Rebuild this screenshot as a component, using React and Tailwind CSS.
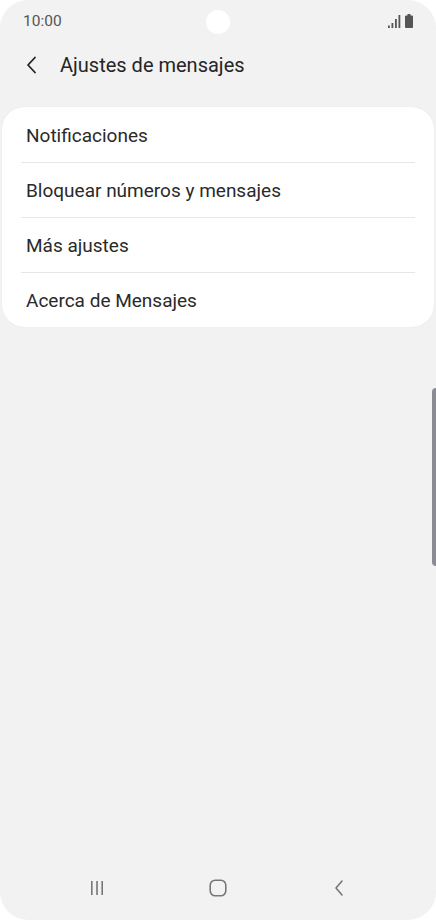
import React from "react";

const rows = ["Notificaciones", "Bloquear números y mensajes", "Más ajustes", "Acerca de Mensajes"];

const App = () => {
  return (
    <div className="w-[436px] h-[920px] bg-white" style={{ fontFamily: "Roboto, 'Noto Sans', sans-serif" }}>
      <div className="relative w-full h-full bg-[#f2f2f2] rounded-[28px] flex flex-col overflow-hidden">
        {/* status bar */}
        <div className="h-[42px] flex items-center justify-between pl-[23px] pr-[23px] pt-[2px]">
          <span className="text-[15.5px] text-[#555]">10:00</span>
          <div className="flex items-end gap-[4px] pb-[2px]">
            <svg width="13" height="13" viewBox="0 0 13 13">
              <rect x="0" y="10.5" width="1.8" height="2.5" fill="#555" />
              <rect x="3.5" y="8" width="1.8" height="5" fill="#555" />
              <rect x="7" y="4" width="1.8" height="9" fill="#555" />
              <rect x="10.5" y="0" width="1.8" height="13" fill="#555" />
            </svg>
            <svg width="8" height="14" viewBox="0 0 8 14">
              <rect x="2.5" y="0" width="3" height="2" fill="#555" />
              <rect x="0" y="1.5" width="8" height="12.5" rx="1" fill="#555" />
            </svg>
          </div>
        </div>
        <div className="absolute left-[206px] top-[10px] w-[24px] h-[24px] rounded-full bg-white" />

        {/* header */}
        <div className="h-[46px] flex items-center pl-[24px]">
          <svg width="16" height="18" viewBox="0 0 16 18" fill="none">
            <path d="M11 1.5 L4 9 L11 16.5" stroke="#222" strokeWidth="1.8" strokeLinecap="round" strokeLinejoin="round" />
          </svg>
          <span className="ml-[20px] text-[20px] text-[#252525]">Ajustes de mensajes</span>
        </div>

        {/* card */}
        <div className="mx-[2px] mt-[19px] bg-white rounded-[22px] shadow-[0_0_1px_rgba(0,0,0,0.12)]">
          {rows.map((r, i) => (
            <div key={r} className="h-[55px] px-[19px] flex flex-col">
              {i > 0 && <div className="h-px bg-[#e6e6e6]" />}
              <div className="flex-1 flex items-center pl-[5px] pt-[3px] text-[19px] text-[#2a2a2a]">{r}</div>
            </div>
          ))}
        </div>

        <div className="flex-1" />

        {/* nav bar */}
        <div className="h-[56px] flex items-center justify-between pb-[8px]">
          <div className="w-[194px] flex justify-center">
            <svg width="16" height="16" viewBox="0 0 16 16">
              <rect x="2" y="1" width="1.6" height="14" fill="#777" />
              <rect x="7.2" y="1" width="1.6" height="14" fill="#777" />
              <rect x="12.4" y="1" width="1.6" height="14" fill="#777" />
            </svg>
          </div>
          <div className="flex justify-center">
            <svg width="18" height="18" viewBox="0 0 18 18" fill="none">
              <rect x="1.2" y="1.2" width="15.6" height="15.6" rx="5" stroke="#777" strokeWidth="1.6" />
            </svg>
          </div>
          <div className="w-[194px] flex justify-center">
            <svg width="14" height="18" viewBox="0 0 14 18" fill="none">
              <path d="M10 2 L4 9 L10 16" stroke="#777" strokeWidth="1.6" strokeLinecap="round" strokeLinejoin="round" />
            </svg>
          </div>
        </div>

        {/* scroll indicator */}
        <div className="absolute right-0 top-[388px] w-[4px] h-[178px] rounded-l-full bg-[#8b8b94]" />
      </div>
    </div>
  );
};

export default App;
